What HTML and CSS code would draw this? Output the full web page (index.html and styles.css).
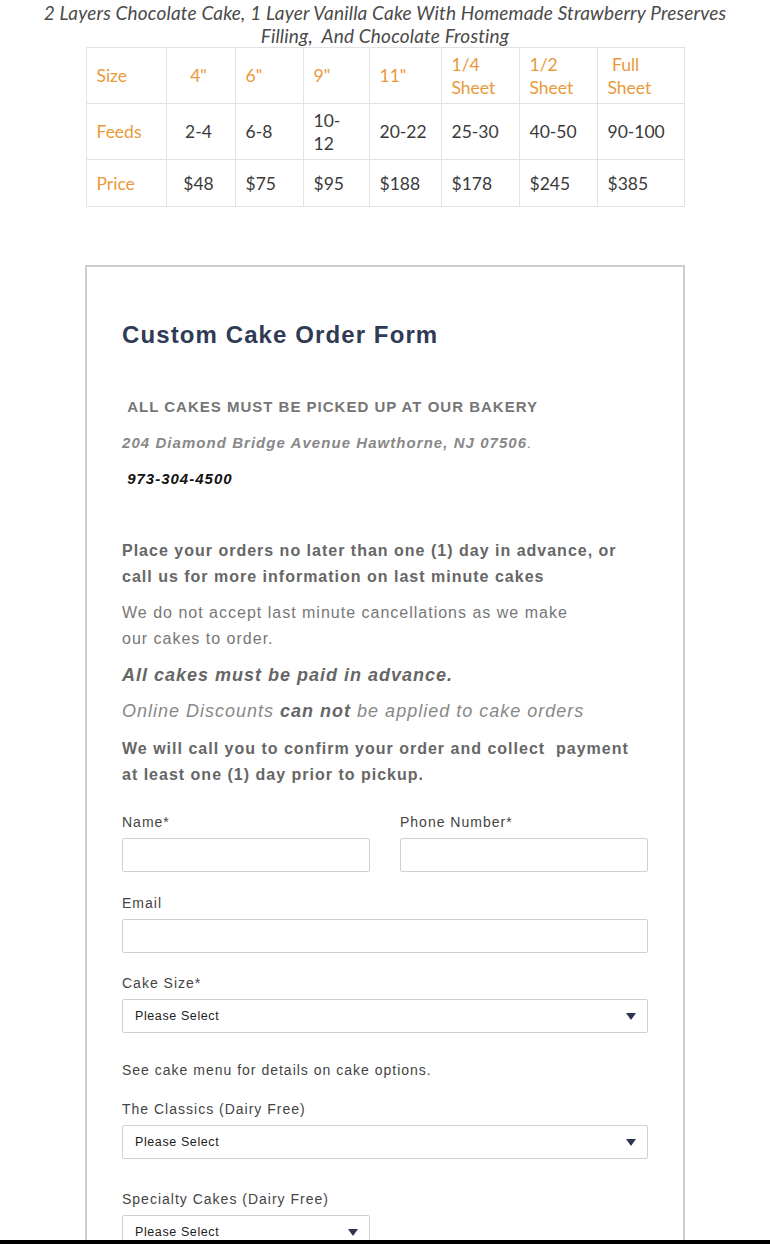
FILE: index.html
```html
<!DOCTYPE html>
<html lang="en">
<head>
<meta charset="utf-8">
<title>Custom Cake Order Form</title>
<link rel="stylesheet" href="styles.css">
</head>
<body>
<p class="cake-desc">2 Layers Chocolate Cake, 1 Layer Vanilla Cake With Homemade Strawberry Preserves<br>Filling,&nbsp; And Chocolate Frosting</p>
<table class="prices">
  <colgroup>
    <col style="width:80px"><col style="width:69px"><col style="width:68px"><col style="width:66px"><col style="width:72px"><col style="width:78px"><col style="width:78px"><col style="width:87px">
  </colgroup>
  <tr class="row-size">
    <th>Size</th><th class="c">4"</th><th>6"</th><th>9"</th><th>11"</th><th>1/4<br>Sheet</th><th>1/2<br>Sheet</th><th>&nbsp;Full<br>Sheet</th>
  </tr>
  <tr class="row-feeds">
    <th>Feeds</th><td class="c">2-4</td><td>6-8</td><td>10-<br>12</td><td>20-22</td><td>25-30</td><td>40-50</td><td>90-100</td>
  </tr>
  <tr class="row-price">
    <th>Price</th><td class="c">$48</td><td>$75</td><td>$95</td><td>$188</td><td>$178</td><td>$245</td><td>$385</td>
  </tr>
</table>

<section class="form-box">
  <h1 class="form-title">Custom Cake Order Form</h1>
  <p class="pickup">&nbsp;ALL CAKES MUST BE PICKED UP AT OUR BAKERY</p>
  <p class="address">204 Diamond Bridge Avenue Hawthorne, NJ 07506<span class="dot">.</span></p>
  <p class="phone">&nbsp;973-304-4500</p>

  <p class="note bold first">Place your orders no later than one (1) day in advance, or call us for more information on last minute cakes</p>
  <p class="note light">We do not accept last minute cancellations as we make<br>our cakes to order.</p>
  <p class="note big bold-italic">All cakes must be paid in advance.</p>
  <p class="note big italic">Online Discounts <b>can not</b> be applied to cake orders</p>
  <p class="note bold last">We will call you to confirm your order and collect&nbsp; payment at least one (1) day prior to pickup.</p>

  <div class="row two">
    <div class="field">
      <label>Name*</label>
      <input type="text">
    </div>
    <div class="field">
      <label>Phone Number*</label>
      <input type="text">
    </div>
  </div>
  <div class="field f-email">
    <label>Email</label>
    <input type="text">
  </div>
  <div class="field f-size">
    <label>Cake Size*</label>
    <div class="select">
      <span>Please Select</span>
      <svg class="arrow" width="10" height="7" viewBox="0 0 10 7"><path d="M0 0 H10 L5 7 Z" fill="#2e3550"/></svg>
    </div>
  </div>
  <p class="hint">See cake menu for details on cake options.</p>
  <div class="field f-classics">
    <label>The Classics (Dairy Free)</label>
    <div class="select">
      <span>Please Select</span>
      <svg class="arrow" width="10" height="7" viewBox="0 0 10 7"><path d="M0 0 H10 L5 7 Z" fill="#2e3550"/></svg>
    </div>
  </div>
  <div class="field f-special">
    <label>Specialty Cakes (Dairy Free)</label>
    <div class="select half">
      <span>Please Select</span>
      <svg class="arrow" width="10" height="7" viewBox="0 0 10 7"><path d="M0 0 H10 L5 7 Z" fill="#2e3550"/></svg>
    </div>
  </div>
</section>
<div class="edge"></div>
</body>
</html>
```

FILE: styles.css
```css
html, body {
  margin: 0;
  padding: 0;
  background: #fff;
}
body {
  width: 770px;
  font-family: "Liberation Sans", Arial, sans-serif;
  color: #333;
}

.cake-desc {
  margin: 1px 0 0;
  font-family: Lato, "Liberation Sans", sans-serif;
  font-style: italic;
  font-size: 19px;
  line-height: 23px;
  letter-spacing: 0.17px;
  color: #4a4a4a;
  text-align: center;
  white-space: nowrap;
}

.prices {
  margin: 0 auto;
  width: 598px;
  table-layout: fixed;
  border-collapse: collapse;
  font-family: Lato, "Liberation Sans", sans-serif;
  font-size: 17.5px;
  line-height: 23px;
}
.prices th, .prices td {
  border: 1px solid #e2e2e2;
  padding: 0 10px;
  text-align: left;
  vertical-align: middle;
  font-weight: normal;
}
.prices th { color: #e9993b; }
.prices td { color: #3a3a3a; }
.prices .c { text-align: center; padding-right: 14px; }
.row-size { height: 56px; }
.row-feeds { height: 56px; }
.row-price { height: 47px; }

.form-box {
  margin: 58px 0 0 85px;
  width: 526px;
  border: 2px solid #cdcdcd;
  border-bottom: none;
  padding: 53px 35px 40px;
}

.form-title {
  margin: 0;
  font-size: 24px;
  line-height: 29px;
  font-weight: bold;
  letter-spacing: 1.1px;
  color: #2f3a55;
}

.pickup {
  margin: 48px 0 0;
  font-size: 15px;
  line-height: 20px;
  font-weight: bold;
  letter-spacing: 1px;
  color: #767676;
}
.address {
  margin: 16px 0 0;
  font-size: 15px;
  line-height: 20px;
  font-weight: bold;
  font-style: italic;
  letter-spacing: 1.05px;
  color: #888;
}
.address .dot { font-weight: normal; }
.phone {
  margin: 16px 0 0;
  font-size: 15px;
  line-height: 20px;
  font-weight: bold;
  font-style: italic;
  letter-spacing: 1px;
  color: #111;
}

.note {
  margin: 10px 0 0;
  font-size: 16px;
  line-height: 26px;
  letter-spacing: 1px;
  color: #666;
}
.note.first { margin-top: 49px; }
.note.last { margin-top: 12px; }
.note.bold { font-weight: bold; }
.note.light { color: #777; }
.note.big { font-size: 18px; }
.note.bold-italic { font-weight: bold; font-style: italic; }
.note.italic { font-style: italic; color: #888; }
.note.italic b { color: #666; }

.row.two {
  display: grid;
  grid-template-columns: 1fr 1fr;
  column-gap: 30px;
  margin-top: 24px;
}
.field label {
  display: block;
  font-size: 14px;
  line-height: 20px;
  letter-spacing: 1px;
  color: #444;
  margin-bottom: 6px;
}
.field input {
  display: block;
  box-sizing: border-box;
  width: 100%;
  height: 34px;
  margin: 0;
  border: 1px solid #d0d0d0;
  border-radius: 2px;
  background: #fff;
}
.f-email { margin-top: 21px; }
.f-size { margin-top: 20px; }
.f-classics { margin-top: 19px; }
.f-special { margin-top: 30px; }

.select {
  box-sizing: border-box;
  height: 34px;
  border: 1px solid #d0d0d0;
  border-radius: 2px;
  display: flex;
  align-items: center;
  justify-content: space-between;
  padding: 0 11px 0 12px;
  font-size: 12.5px;
  letter-spacing: 0.6px;
  color: #222;
}
.select.half { width: 248px; }
.arrow { display: block; }

.hint {
  margin: 27px 0 0;
  font-size: 14px;
  line-height: 20px;
  letter-spacing: 1px;
  color: #444;
}

.edge {
  position: fixed;
  left: 0;
  right: 0;
  bottom: 0;
  height: 4px;
  background: #000;
}
```
